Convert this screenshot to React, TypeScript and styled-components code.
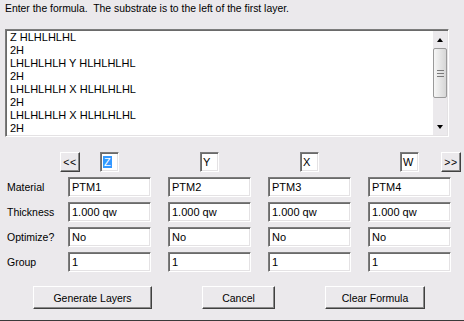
import React from "react";
import styled, { createGlobalStyle } from "styled-components";

const Global = createGlobalStyle`
  html, body { margin: 0; padding: 0; background: #ebe9ec; }
  * { box-sizing: border-box; }
`;

const Window = styled.div`
  width: 464px;
  height: 321px;
  background: #ebe9ec;
  border-bottom: 1px solid #3a3a3a;
  font-family: "Liberation Sans", Arial, sans-serif;
  font-size: 10.5px;
  color: #000;
  display: flex;
  flex-direction: column;
  overflow: hidden;
`;

const Prompt = styled.div`
  margin: 2px 0 0 5px;
  height: 13px;
  line-height: 13px;
  font-size: 10.4px;
  white-space: pre;
`;

const sunken = `
  background: #fff;
  border-top: 1px solid #7c7c7c;
  border-left: 1px solid #7c7c7c;
  border-right: 1px solid #fff;
  border-bottom: 1px solid #fff;
  box-shadow: inset 1px 1px 0 #6a6a6a, inset -1px -1px 0 #e4e2e4;
`;

const raised = `
  background: #ebe9ec;
  border-top: 1px solid #fff;
  border-left: 1px solid #fff;
  border-right: 1px solid #404040;
  border-bottom: 1px solid #404040;
  box-shadow: inset -1px -1px 0 #8a8a8a;
`;

const Memo = styled.div`
  ${sunken}
  margin: 14px 0 0 5px;
  width: 444px;
  height: 108px;
  display: flex;
  overflow: hidden;
`;

const MemoText = styled.div`
  flex: 1;
  padding: 1px 0 0 4px;
  font-size: 11px;
  line-height: 13px;
  white-space: pre;
  overflow: hidden;
`;

const ScrollBar = styled.div`
  width: 14px;
  margin: 1px 1px 1px 0;
  display: flex;
  flex-direction: column;
  background: #ebe9ec;
`;

const Arrow = styled.div<{ $dir: "up" | "down" }>`
  height: 17px;
  flex: none;
  display: flex;
  align-items: center;
  justify-content: center;
  &::before {
    content: "";
    width: 0;
    height: 0;
    border-left: 3.5px solid transparent;
    border-right: 3.5px solid transparent;
    ${(p) =>
      p.$dir === "up"
        ? "border-bottom: 4px solid #000;"
        : "border-top: 4px solid #000;"}
  }
`;

const Thumb = styled.div`
  height: 50px;
  flex: none;
  border: 1px solid #9a9a9a;
  border-radius: 2px;
  background: linear-gradient(to right, #f6f6f6, #d6d6d6);
  display: flex;
  flex-direction: column;
  align-items: center;
  justify-content: center;
  gap: 2px;
`;

const Grip = styled.span`
  display: block;
  width: 7px;
  height: 1px;
  background: #7a7a7a;
`;

const Track = styled.div`
  flex: 1;
`;

const NavRow = styled.div`
  margin: 15px 0 0 60px;
  height: 20px;
  display: grid;
  grid-template-columns: 20px repeat(3, 100px) 61px 20px;
`;

const NavButton = styled.div`
  ${raised}
  display: flex;
  align-items: center;
  justify-content: center;
  font-size: 10.5px;
  letter-spacing: 0.5px;
`;

const LetterBox = styled.div`
  ${sunken}
  margin-left: 20px;
  width: 19px;
  padding: 0 0 0 2px;
  display: flex;
  align-items: center;
  font-size: 11px;
`;

const Selected = styled.span`
  background: #3399ff;
  color: #fff;
  padding: 0 1px;
`;

const Form = styled.div`
  margin: 5px 0 0 7px;
  display: grid;
  grid-template-columns: 44px repeat(4, 83px);
  grid-auto-rows: 20px;
  column-gap: 17px;
  row-gap: 5px;
`;

const Label = styled.div`
  align-self: center;
  white-space: nowrap;
`;

const Field = styled.input`
  ${sunken}
  width: 83px;
  height: 20px;
  margin: 0;
  padding: 0 3px;
  outline: none;
  font-family: "Liberation Sans", Arial, sans-serif;
  font-size: 11px;
  color: #000;
`;

const Actions = styled.div`
  margin: 14px 0 0 33px;
  display: grid;
  grid-template-columns: 119px 73px 100px;
  column-gap: 50px;
  height: 23px;
`;

const ActionButton = styled.div`
  ${raised}
  display: flex;
  align-items: center;
  justify-content: center;
  font-size: 10.5px;
`;

const lines = [
  "Z HLHLHLHL",
  "2H",
  "LHLHLHLH Y HLHLHLHL",
  "2H",
  "LHLHLHLH X HLHLHLHL",
  "2H",
  "LHLHLHLH X HLHLHLHL",
  "2H",
];

const rows: { label: string; values: string[] }[] = [
  { label: "Material", values: ["PTM1", "PTM2", "PTM3", "PTM4"] },
  { label: "Thickness", values: ["1.000 qw", "1.000 qw", "1.000 qw", "1.000 qw"] },
  { label: "Optimize?", values: ["No", "No", "No", "No"] },
  { label: "Group", values: ["1", "1", "1", "1"] },
];

export default function App() {
  return (
    <>
      <Global />
      <Window>
        <Prompt>Enter the formula.  The substrate is to the left of the first layer.</Prompt>
        <Memo>
          <MemoText>
            {lines.map((l, i) => (
              <div key={i}>{l}</div>
            ))}
          </MemoText>
          <ScrollBar>
            <Arrow $dir="up" />
            <Thumb>
              <Grip />
              <Grip />
              <Grip />
            </Thumb>
            <Track />
            <Arrow $dir="down" />
          </ScrollBar>
        </Memo>
        <NavRow>
          <NavButton>&lt;&lt;</NavButton>
          <LetterBox>
            <Selected>Z</Selected>
          </LetterBox>
          <LetterBox>Y</LetterBox>
          <LetterBox>X</LetterBox>
          <LetterBox>W</LetterBox>
          <NavButton>&gt;&gt;</NavButton>
        </NavRow>
        <Form>
          {rows.map((r) => (
            <React.Fragment key={r.label}>
              <Label>{r.label}</Label>
              {r.values.map((v, i) => (
                <Field key={i} defaultValue={v} readOnly />
              ))}
            </React.Fragment>
          ))}
        </Form>
        <Actions>
          <ActionButton>Generate Layers</ActionButton>
          <ActionButton>Cancel</ActionButton>
          <ActionButton>Clear Formula</ActionButton>
        </Actions>
      </Window>
    </>
  );
}
